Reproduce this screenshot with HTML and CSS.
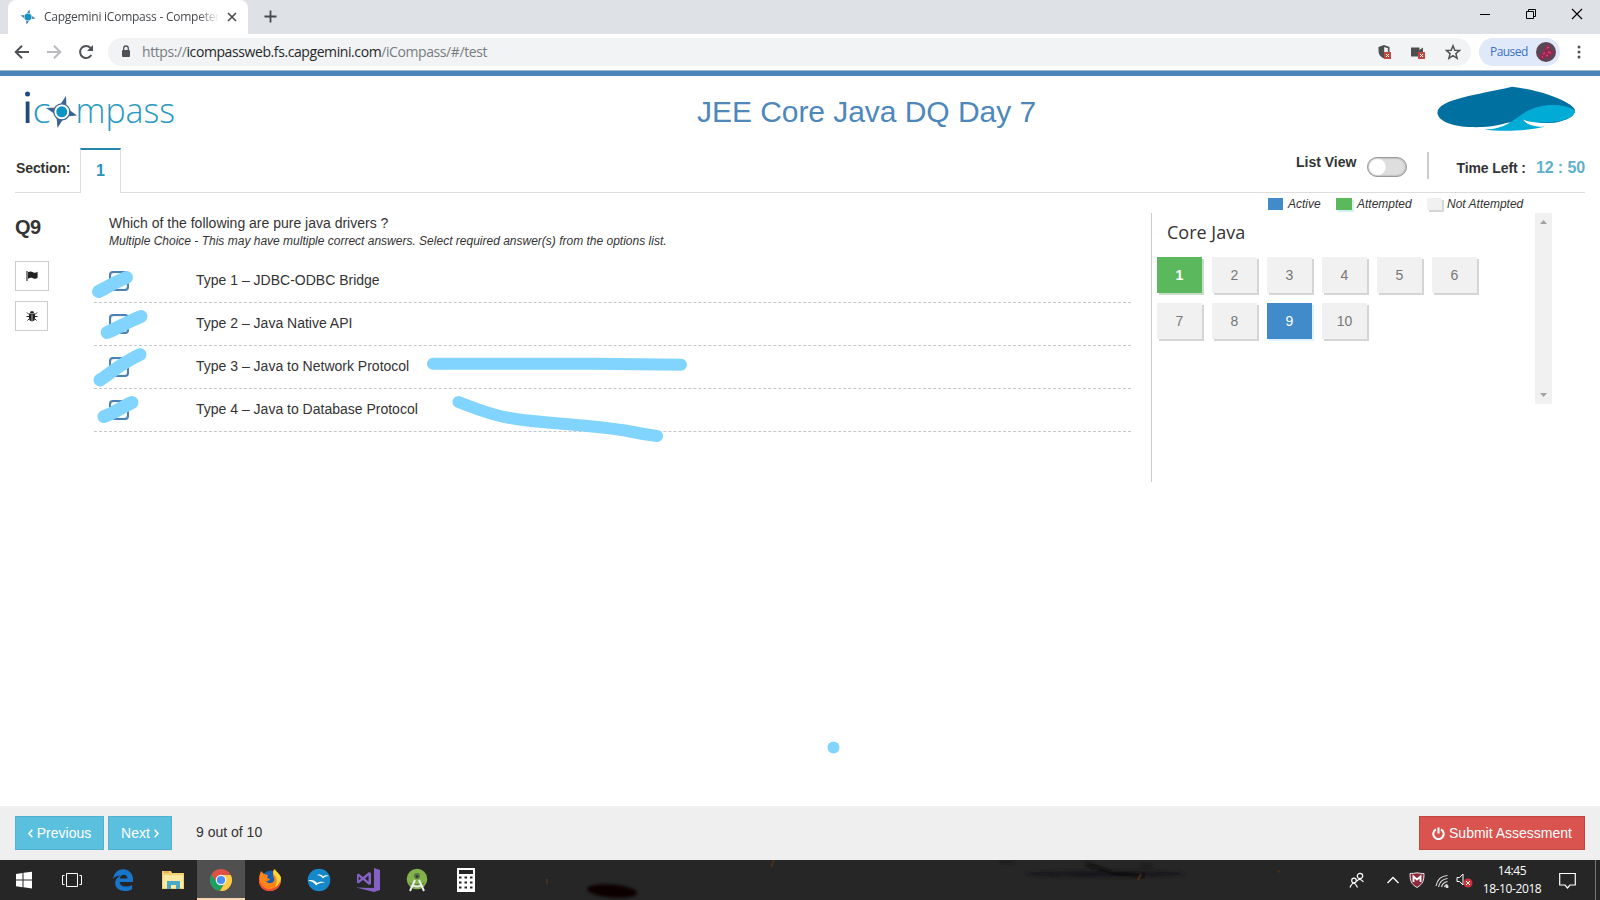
FILE: index.html
```html
<!DOCTYPE html>
<html lang="en">
<head>
<meta charset="utf-8">
<title>Capgemini iCompass - Competency</title>
<link rel="stylesheet" href="styles.css">
</head>
<body>
<div class="screen">
  <div class="tabstrip">
    <div class="tab">
      <svg class="favicon" width="16" height="16" viewBox="0 0 16 16"><path d="M9.500 .5L10 6 8 8 6 5.500zM6.500 15.500L6 10 8 8 10 10.500zM.5 6.500L6 6 8 8 5.500 10zM15.500 9.500L10 10 8 8 10.500 6z" fill="#3c6f9f"/><circle cx="8" cy="8" r="4.300" fill="#b9dbe9"/><circle cx="8" cy="8" r="3.300" fill="#1692c0"/></svg>
      <span class="tab-title">Capgemini iCompass - Competen</span>
      <svg class="tab-close" width="10" height="10" viewBox="0 0 10 10"><path d="M1 1l8 8M9 1l-8 8" stroke="#46494d" stroke-width="1.600"/></svg>
    </div>
    <svg class="new-tab" width="13" height="13" viewBox="0 0 13 13"><path d="M6.500 .5v12M.5 6.500h12" stroke="#46494d" stroke-width="1.800"/></svg>
    <div class="window-controls">
      <svg width="12" height="12" viewBox="0 0 12 12"><path d="M1 6.500h10" stroke="#000"/></svg>
      <svg width="12" height="12" viewBox="0 0 12 12"><path d="M1.500 3.500h7v7h-7zM3.500 3.500v-2h7v7h-2" fill="none" stroke="#000"/></svg>
      <svg width="12" height="12" viewBox="0 0 12 12"><path d="M1 1l10 10M11 1L1 11" stroke="#000" stroke-width="1.200"/></svg>
    </div>
  </div>
  <div class="toolbar">
    <div class="nav">
      <svg width="16" height="16" viewBox="0 0 16 16"><path d="M15 8H2M8 1.700L1.700 8 8 14.300" fill="none" stroke="#505356" stroke-width="2"/></svg>
      <svg width="16" height="16" viewBox="0 0 16 16"><path d="M1 8h13M8 1.700L14.300 8 8 14.300" fill="none" stroke="#b9bbbe" stroke-width="2"/></svg>
      <svg width="16" height="16" viewBox="0 0 16 16"><path d="M13.300 11A6 6 0 1 1 12.600 4" fill="none" stroke="#505356" stroke-width="2"/><path d="M15 1v6H9z" fill="#505356"/></svg>
    </div>
    <div class="omnibox">
      <svg class="lock" width="10" height="13" viewBox="0 0 10 13"><rect x="1" y="5" width="8" height="7" rx="1" fill="#505356"/><path d="M2.700 5.500V3.300a2.300 2.300 0 0 1 4.600 0v2.200" fill="none" stroke="#505356" stroke-width="1.300"/></svg>
      <span class="url">https://<b>icompassweb.fs.capgemini.com</b>/iCompass/#/test</span>
      <div class="omni-icons">
        <svg width="16" height="16" viewBox="0 0 16 16"><path d="M7 1l5.500 2v4c0 3.500-2 6-5.500 7.500C3.500 13 1.500 10.500 1.500 7V3z" fill="#4c4e50"/><path d="M7.200 3l3.700 1.200V8H7.200z" fill="#f6f7f8"/><path d="M7 8h7v7H7z" fill="#c5473e"/><path d="M9 10l3 3m0-3l-3 3" stroke="#fff"/></svg>
        <svg width="16" height="16" viewBox="0 0 16 16"><path d="M0 3.500h8.500v2.500L12 3.500V8H7v4.500H0z" fill="#4c4e50"/><path d="M7 8h7v7H7z" fill="#c5473e"/><path d="M9 10l3 3m0-3l-3 3" stroke="#fff"/></svg>
        <svg width="16" height="16" viewBox="0 0 16 16"><path d="M8 1.700l1.800 4.500 4.800.3-3.700 3.100 1.200 4.700L8 11.700l-4.100 2.600 1.200-4.700L1.400 6.500l4.800-.3z" fill="none" stroke="#505356" stroke-width="1.500"/></svg>
      </div>
    </div>
    <div class="profile"><span>Paused</span>
      <svg width="20" height="20" viewBox="0 0 20 20"><circle cx="10" cy="10" r="10" fill="#5c4554"/><path d="M3 13l5-3 0-3 4-4 3 3-3 2 5 1 1 3-4 1-1 4-3-2-5 3z" fill="#94264f"/><path d="M7 12l2-1m2-5l2-1m-1 5l3 1m-5 3l2-1m-6 2l1 0" stroke="#d54172" stroke-width="1.500"/></svg>
    </div>
    <svg class="menu" width="4" height="14" viewBox="0 0 4 14" fill="#505356"><circle cx="2" cy="2" r="1.500"/><circle cx="2" cy="7" r="1.500"/><circle cx="2" cy="12" r="1.500"/></svg>
  </div>
  <div class="page">
    <header class="header">
      <svg class="logo" width="156" height="46" viewBox="20 88 156 46">
        <circle cx="27.500" cy="94" r="2.500" fill="#1e4a80"/><path d="M25.700 101.500h3.800V123h-3.800z" fill="#1e4a80"/>
        <text x="32.500" y="122.500" textLength="18" lengthAdjust="spacingAndGlyphs" class="logo-text">c</text>
        <text x="75.500" y="122.500" textLength="99.500" lengthAdjust="spacingAndGlyphs" class="logo-text">mpass</text>
        <path d="M66 96l.5 12-4 2-4-3zM57.500 128l-1-11 4-3 4 3zM46 108l11-.5 3 4-3 4zM77 115.500l-11 1-3-4 3-5z" fill="#3d6394"/>
        <circle cx="61.800" cy="111.800" r="8" fill="#fff" stroke="#3d6394" stroke-width="1.200"/><circle cx="61.800" cy="111.800" r="5.500" fill="#0b94c4"/>
      </svg>
      <h1 class="title">JEE Core Java DQ Day 7</h1>
      <svg class="brand" width="140" height="46" viewBox="1436 86 140 46">
        <path d="M1437.500 113C1437 99 1480 94.500 1512 86.800C1547 91 1574 104 1574.800 110C1576 120 1551 125 1530 126C1520 123 1517 121 1505 123.500C1490 127.500 1480 127.300 1468 127C1452 126 1438 121 1437.500 113z" fill="#0070a1"/>
        <path d="M1574.700 110C1576 120 1556 122 1543 122.500C1534 123 1527 122 1523 119.500C1527 125 1537 127 1545 126.500C1532 130.500 1502 132 1484 129.500C1506 129 1513 120 1524 113C1540 103 1562 103 1574.700 110z" fill="#00acd6"/>
        <path d="M1523 119.500C1531 123 1548 123.500 1560 122.500L1545 126.500C1535 127 1527 125 1523 119.500zM1484 129.300C1495 128.800 1502 127 1508 122.500C1500 126.500 1490 127 1480 128z" fill="#fff"/>
      </svg>
    </header>
    <div class="section-row">
      <span class="section-label">Section:</span>
      <span class="section-tab">1</span>
      <span class="section-rest">
        <span class="list-view">List View</span><span class="toggle"></span><span class="rule"></span>
        <span class="time-label">Time Left :</span><span class="time">12 : 50</span>
      </span>
    </div>
    <main class="main">
      <aside class="question-tools">
        <h2>Q9</h2>
        <button class="tool flag"><svg width="12" height="12" viewBox="0 0 12 12"><path d="M1 1v10" stroke="#333" stroke-width="1.200"/><path d="M2 2.200C4 1 5.500 1.300 7 2.200s3 .7 4.600-.4v6C10 9 8.500 9 7 8.200S4 7.600 2 8.700z" fill="#222"/></svg></button>
        <button class="tool bug"><svg width="12" height="12" viewBox="0 0 12 12"><path d="M4 3a2 2 0 0 1 4 0zM3 3.500h6v4.500q0 3-3 3.500-3-.5-3-3.500z" fill="#222"/><path d="M1 2.500l2 2M11 2.500l-2 2M.5 6.500H3m6 0h2.500M1.500 10.500l2-2m7 2l-2-2" stroke="#222"/><path d="M6 4.500v7" stroke="#eee" stroke-width=".7"/></svg></button>
      </aside>
      <section class="question">
        <p class="prompt">Which of the following are pure java drivers ?</p>
        <p class="hint">Multiple Choice - This may have multiple correct answers. Select required answer(s) from the options list.</p>
        <div class="options">
          <div class="option"><i class="check"></i><span>Type 1 – JDBC-ODBC Bridge</span></div>
          <div class="option"><i class="check"></i><span>Type 2 – Java Native API</span></div>
          <div class="option"><i class="check"></i><span>Type 3 – Java to Network Protocol</span></div>
          <div class="option"><i class="check"></i><span>Type 4 – Java to Database Protocol</span></div>
        </div>
      </section>
      <aside class="palette">
        <div class="legend">
          <span class="swatch active"></span><em class="l-active">Active</em>
          <span class="swatch done"></span><em class="l-done">Attempted</em>
          <span class="swatch"></span><em>Not Attempted</em>
        </div>
        <div class="palette-body">
          <div class="palette-main">
            <h3>Core Java</h3>
            <div class="grid">
              <span class="cell done">1</span><span class="cell">2</span><span class="cell">3</span><span class="cell">4</span><span class="cell">5</span><span class="cell">6</span>
              <span class="cell">7</span><span class="cell">8</span><span class="cell active">9</span><span class="cell">10</span>
            </div>
          </div>
          <div class="scrollbar">
            <svg width="7" height="4" viewBox="0 0 7 4"><path d="M0 4L3.500 0 7 4z" fill="#a3a3a3"/></svg>
            <svg width="7" height="4" viewBox="0 0 7 4"><path d="M0 0L3.500 4 7 0z" fill="#a3a3a3"/></svg>
          </div>
        </div>
      </aside>
    </main>
    <footer class="footer">
      <button class="btn prev"><svg width="5" height="9" viewBox="0 0 5 9"><path d="M4.300 .7L1 4.500l3.300 3.800" fill="none" stroke="#fff" stroke-width="1.500"/></svg><span>Previous</span></button>
      <button class="btn next"><span>Next</span><svg width="5" height="9" viewBox="0 0 5 9"><path d="M.7 .7L4 4.500.7 8.300" fill="none" stroke="#fff" stroke-width="1.500"/></svg></button>
      <span class="count">9 out of 10</span>
      <button class="btn submit"><svg width="13" height="13" viewBox="0 0 13 13"><path d="M4 2.300a5.200 5.200 0 1 0 5 0M6.500 .5v6" fill="none" stroke="#fff" stroke-width="2.100"/></svg><span>Submit Assessment</span></button>
    </footer>
  </div>
  <div class="taskbar">
    <svg class="wallpaper" width="780" height="40" viewBox="520 860 780 40">
      <defs><filter id="soft"><feGaussianBlur stdDeviation="1.600"/></filter></defs>
      <g filter="url(#soft)"><ellipse cx="612" cy="891" rx="25" ry="6.500" transform="rotate(5 612 891)" fill="#0c0000"/><ellipse cx="1105" cy="874" rx="80" ry="3" fill="#19181a"/><path d="M1086 864l26 9 33 3" fill="none" stroke="#110908" stroke-width="3"/><path d="M1000 862h14M1140 866h12" stroke="#151515" stroke-width="2"/></g>
      <path d="M774 860l-3 7M1141 874l-3 6M547 879v5M1278 871l2 1" stroke="#5a3510" stroke-width="2" opacity=".7"/>
    </svg>
    <div class="apps">
      <span class="app"><svg width="24" height="24" viewBox="0 0 24 24" fill="#fff"><path d="M4 6l6.500-1v6.500H4zM11.500 4.800L20 3.800v7.700h-8.500zM4 12.500h6.500v6.700L4 18.200zM11.500 12.500H20v8l-8.500-1.200z"/></svg></span>
      <span class="app"><svg width="24" height="24" viewBox="0 0 24 24" fill="none" stroke="#fff"><path d="M6.500 5.500h11v13h-11zM4.500 7.500h-2v9h2M19.500 7.500h2v9h-2"/></svg></span>
      <span class="app"><svg width="24" height="24" viewBox="0 0 24 24"><path d="M2 11C3 4 8 1 12.500 1.200 18.500 1.500 22 6 22 11v3H8.700c.2 3 2.800 4.600 6 4.600 2.500 0 4.500-.6 6.300-1.700v4.300c-2 1.300-4.500 1.800-7.300 1.800C7.500 23 4.200 19 4.200 15.500c0-4 2.500-6.500 5.300-7.700C6.500 7.500 4 8.700 2 11zM8.800 10.500h7.500c0-2.500-1.300-3.700-3.400-3.700-2 0-3.700 1.300-4.100 3.700z" fill="#1776c9" fill-rule="evenodd"/></svg></span>
      <span class="app"><svg width="24" height="24" viewBox="0 0 24 24"><path d="M1 3h9l1 2h12v16H1z" fill="#f4cf73"/><path d="M2 7h20v13H2z" fill="#fde9a2"/><path d="M3 4h5" stroke="#e8a545" stroke-width="1.500"/><path d="M6 21v-8h13v8h-4v-4h-5v4z" fill="#4aa9c6"/></svg></span>
      <span class="app current"><svg width="24" height="24" viewBox="0 0 24 24"><circle cx="12" cy="12" r="11" fill="#de5145"/><path d="M2.500 6.500A11 11 0 0 0 11 23l5-9H7.500z" fill="#1aa15f"/><path d="M21.700 7H12l4.800 6L11 23A11 11 0 0 0 21.700 7z" fill="#ffcd46"/><circle cx="12" cy="12" r="5.300" fill="#f4f4f4"/><circle cx="12" cy="12" r="4.100" fill="#4b8bf4"/></svg></span>
      <span class="app"><svg width="24" height="24" viewBox="0 0 24 24"><circle cx="12.500" cy="11.500" r="9" fill="#195fb0"/><path d="M2 6l1-3 3 3 4 1-1 3 3 1c-1 2-3 2-4 2 2 3 6 3 8 0 1-3-1-4-1-7 0-2 1-4 2-5 1 3 5 4 6 9 1 7-4 13-11 13C5 23 1 18 1 13c0-3 0-5 1-7z" fill="#ff8418"/><path d="M16 1c2 3 6 5 7 9-1 3-2 7-6 9 3-5 2-10-1-12-1-2-1-4 0-6z" fill="#ffd739"/><path d="M1.500 8c0 5 1 11 8 13 6 1 10-2 13-7-1 6-6 9-11 9C4 23-.5 16 1.500 8z" fill="#f3443c"/></svg></span>
      <span class="app"><svg width="24" height="24" viewBox="0 0 24 24"><circle cx="12" cy="12" r="11.300" fill="#1687c9"/><path d="M1 12.500c4-1 7 0 9 2.500 3-2 6-1.500 8-.5-4 0-7 1-9 3-2-3-4-4-8-5zM10 7c3-1 5 0 6 1.500 2-1.500 4-1.500 6-.5-3 0-5 1-6 2.500C15 8.500 13 7.500 10 7z" fill="#fff"/></svg></span>
      <span class="app"><svg width="24" height="24" viewBox="0 0 24 24"><path d="M18 0l6 2v20l-6 2L0 19.500l18 .5zM1 6.500l1.500-1 4.500 3.500 6-5 2 1v11l-2 1-6-5-4.500 3.500-1.500-1zM2.700 8.500v4l2.300-2zM12.500 7.500l-3.500 3 3.500 3z" fill="#8661c5" fill-rule="evenodd"/></svg></span>
      <span class="app"><svg width="24" height="24" viewBox="0 0 24 24"><circle cx="12" cy="11" r="10.300" fill="#83b14a"/><path d="M4 14q8 4 16 0l-3 4H7z" fill="#5d8a39"/><path d="M10 12L5 23M14 12l5 11M7.500 17q4.500 3 9 0" fill="none" stroke="#eee" stroke-width="2"/><circle cx="12" cy="8" r="3" fill="#56734b"/><circle cx="12" cy="8.500" r="1.200" fill="#303c2c"/></svg></span>
      <span class="app"><svg width="24" height="24" viewBox="0 0 24 24"><path d="M3 0h18v24H3z" fill="#fff"/><path d="M5 2h14v4H5z" fill="#262626"/><path d="M5 9.500h14M5 14.500h14M5 19.500h14" stroke="#262626" stroke-width="2" stroke-dasharray="2.500 3"/></svg></span>
    </div>
    <div class="tray">
      <svg class="people" width="16" height="16" viewBox="0 0 16 16" fill="none" stroke="#fff" stroke-width="1.200"><circle cx="11" cy="4" r="2.700"/><circle cx="5" cy="8.500" r="2.300"/><path d="M8 9q3-3.500 6.500 1M1 15.500q3.500-8.500 7.500 0"/></svg>
      <svg class="chev" width="14" height="8" viewBox="0 0 14 8"><path d="M1.500 7L7 1.500 12.500 7" fill="none" stroke="#fff" stroke-width="1.300"/></svg>
      <svg class="shield" width="16" height="16" viewBox="0 0 16 16"><path d="M1 1.500q4 0 7-.7 3 .7 7 .7c0 7-1 10.500-7 14C2 12 1 8.500 1 1.500z" fill="#8e2a3c" stroke="#e4e4e4"/><path d="M4.500 10V4.500L8 7.500l3.500-3V10" fill="none" stroke="#fff" stroke-width="1.900"/></svg>
      <svg class="wifi" width="14" height="14" viewBox="0 0 14 14" fill="none" stroke="#ddd" stroke-width="1.200"><path d="M1 12Q3 2 12.500 1.500M3.500 13Q5 5.500 12.500 4.500M6.500 13Q7.500 8.500 12.500 7.500M9.500 13q.5-2.500 3-2.500"/><circle cx="12" cy="12.500" r="1" fill="#fff"/></svg>
      <svg class="sound" width="17" height="16" viewBox="0 0 17 16"><path d="M1 5.500h2.500L7 2v11L3.500 9.500H1z" fill="none" stroke="#fff"/><circle cx="12" cy="11" r="4.500" fill="#d13239"/><path d="M10 9l4 4m0-4l-4 4" stroke="#fff"/></svg>
      <div class="clock"><span>14:45</span><span class="date">18-10-2018</span></div>
      <svg class="notice" width="17" height="17" viewBox="0 0 17 17"><path d="M.7 1.500h15.600v11.500H11l-2.500 3-2.500-3H.7z" fill="none" stroke="#fff" stroke-width="1.200"/></svg>
    </div>
  </div>
  <svg class="ink" width="1600" height="900" viewBox="0 0 1600 900" fill="none" stroke="#81d4fd" stroke-linecap="round" stroke-width="13">
    <path d="M98.500 291.500C104 289 114 282.500 126.500 277.500"/><path d="M107 332.500C116 329 127 322 141 316.500"/><path d="M100 380C111 373 120 364 140 354.500"/><path d="M104 416.500C113 414 120 408 132 402.500"/>
    <path d="M433 363.700H595L681 364.700" stroke-width="12"/><path d="M458.500 402C485 412.500 502 418 527 420.500C570 425 590 425 625 430.500Q642 434 657 436" stroke-width="12"/><circle cx="833.500" cy="747.500" r="6" fill="#81d4fd" stroke="none"/>
  </svg>
</div>
</body>
</html>
```
FILE: styles.css
```css
* { box-sizing: border-box; }
body { margin: 0; background: #fff; color: #333; font-family: "Liberation Sans", Arial, sans-serif; font-size: 14px; }
h1, h2, h3, p { margin: 0; }
svg { display: block; flex: none; }
button { font-family: inherit; }
.screen { width: 1600px; height: 900px; display: flex; flex-direction: column; position: relative; overflow: hidden; }

.tabstrip { height: 34px; background: #dee1e6; display: flex; padding-left: 8px; flex: none; }
.tab { width: 240px; height: 34px; background: #fff; border-radius: 8px 8px 0 0; display: flex; align-items: center; padding-left: 12px; }
.tab-title { width: 175px; margin-left: 8px; white-space: nowrap; font: 12px/20px "Open Sans", "Noto Sans", sans-serif; letter-spacing: -.24px; color: #45484c; mask-image: linear-gradient(90deg, #000 88%, transparent 100%); }
.tab-close { margin-left: 8px; }
.new-tab { margin: 10px 0 0 16px; }
.window-controls { margin-left: auto; display: flex; gap: 34px; padding: 8px 17px 0 0; }

.toolbar { height: 36px; background: #fff; display: flex; align-items: center; flex: none; }
.nav { display: flex; gap: 16px; padding-left: 14px; width: 108px; }
.omnibox { width: 1363px; height: 28px; border-radius: 14px; background: #f1f3f4; display: flex; align-items: center; padding: 0 10px 0 13px; }
.lock { margin-top: -1px; }
.url { margin-left: 11px; font: 14px/20px "Open Sans", "Noto Sans", sans-serif; letter-spacing: -.41px; color: #797c80; white-space: nowrap; }
.url b { font-weight: 400; color: #26282b; }
.omni-icons { margin-left: auto; display: flex; gap: 18px; }
.profile { margin-left: 8px; width: 81px; height: 28px; border-radius: 14px; background: #dfe9f9; display: flex; align-items: center; justify-content: space-between; padding: 0 4px 0 11px; font: 12px/20px "Open Sans", sans-serif; letter-spacing: -.55px; color: #3c70c0; }
.menu { margin-left: 17px; }

.page { height: 790px; flex: none; display: flex; flex-direction: column; border-top: 1px solid #a3b9c9; }
.header { border-top: 5px solid #4984ba; height: 77px; flex: none; display: grid; grid-template-columns: 677px 1fr 164px; }
.logo { margin: 12px 0 0 20px; }
.logo-text { font: 300 35px "Open Sans", Lato, sans-serif; fill: #2798c1; }
.title { margin-top: 19px; padding-left: 20px; font-size: 30px; font-weight: 400; line-height: 34px; letter-spacing: -.05px; color: #4e88ba; white-space: nowrap; }
.brand { margin-top: 10px; }

.section-row { margin: 0 15px; height: 45px; display: flex; font-weight: bold; flex: none; }
.section-label { width: 65px; padding: 12px 0 0 1px; line-height: 16px; letter-spacing: -.1px; border-bottom: 1px solid #ddd; }
.section-tab { width: 41px; border: solid #ddd; border-width: 0 1px; border-top: 2px solid #2587ae; text-align: center; color: #2a93bd; font-size: 16px; line-height: 42px; }
.section-rest { flex: 1; display: flex; justify-content: flex-end; border-bottom: 1px solid #ddd; white-space: nowrap; }
.list-view { margin-top: 6px; line-height: 16px; }
.toggle { width: 40px; height: 20px; margin: 9px 0 0 11px; border: 1px solid #999; border-radius: 10px; background: radial-gradient(circle at 9px 9px, #fff 8px, #dedede 9px); box-shadow: inset 0 0 2px #888; }
.rule { width: 2px; height: 27px; margin: 4px 0 0 20px; background: #ccc; }
.time-label { margin: 12px 0 0 27px; line-height: 16px; letter-spacing: -.1px; }
.time { margin: 10px 0 0 10px; font-size: 16px; line-height: 20px; letter-spacing: -.1px; color: #5fb0cb; }

.main { flex: 1; display: grid; grid-template-columns: 94px 1037px 469px; min-height: 0; }
.question-tools { padding: 23px 0 0 15px; }
.question-tools h2 { font-size: 20px; line-height: 23px; letter-spacing: -.5px; }
.tool { display: flex; align-items: center; justify-content: center; height: 30px; background: #fff; border: 1px solid #ccc; padding: 0; }
.flag { width: 34px; margin-top: 22px; }
.bug { width: 33px; margin-top: 10px; }
.prompt { padding: 22px 0 0 15px; line-height: 16px; }
.hint { padding: 3px 0 0 15px; font-size: 12px; line-height: 14px; font-style: italic; }
.options { padding-top: 12px; }
.option { height: 43px; display: flex; border-bottom: 1px dashed #c6c6c6; }
.check { width: 20px; height: 20px; margin: 11px 0 0 15px; border: 2px solid #4b81b3; border-radius: 4px; box-shadow: inset 0 0 1px #4b81b3; }
.option span { margin: 12px 0 0 67px; line-height: 16px; }

.palette { padding-left: 20px; }
.legend { height: 20px; display: flex; align-items: flex-start; padding: 5px 0 0 117px; font-size: 12px; line-height: 13px; white-space: nowrap; }
.swatch { width: 15px; height: 12px; background: #f1f1f1; box-shadow: 2px 2px #d6d6d6; margin-right: 5px; }
.swatch.active { background: #428bca; box-shadow: none; }
.swatch.done { background: #5cb85c; box-shadow: 2px 2px #d4f0ef; width: 16px; }
.l-active { width: 48px; }
.l-done { width: 70px; }
.palette-body { display: flex; height: 269px; border-left: 1px solid #ccc; }
.palette-main { width: 383px; padding-left: 5px; }
.palette-main h3 { padding: 7px 0 0 10px; font: 400 18px/25px "Open Sans", sans-serif; }
.grid { padding-top: 12px; display: grid; grid-template-columns: repeat(6, 45px); gap: 10px; }
.cell { height: 36px; line-height: 37px; text-align: center; background: #f1f1f1; box-shadow: 2px 2px #d5d5d5; color: #777; }
.cell.done { background: #5cb85c; box-shadow: 2px 2px #c8dcc8; color: #fff; font-weight: bold; }
.cell.active { background: #428bca; box-shadow: 2px 2px #e0f2fb; color: #fff; }
.scrollbar { width: 17px; height: 191px; background: #f1f1f1; display: flex; flex-direction: column; justify-content: space-between; align-items: center; padding: 7px 0; }

.footer { height: 54px; flex: none; background: #efefef; display: flex; padding: 10px 15px 0; }
.btn { height: 34px; border: 1px solid #52b1cf; background: #5bc0de; color: #fff; font-size: 14px; display: flex; align-items: center; justify-content: center; gap: 4px; padding: 0; white-space: nowrap; }
.prev { width: 89px; }
.next { width: 64px; margin-left: 4px; }
.count { margin: 8px 0 0 24px; line-height: 16px; }
.submit { width: 166px; margin-left: auto; background: #d9534f; border-color: #c14541; }

.taskbar { height: 40px; background: #262626; display: flex; position: relative; }
.wallpaper { position: absolute; left: 520px; top: 0; }
.apps { display: flex; }
.app { width: 49px; height: 40px; display: flex; align-items: center; justify-content: center; }
.app:first-child { width: 48px; }
.app:nth-child(2) { width: 48px; }
.app:nth-child(3) { width: 53px; }
.app:nth-child(4) { width: 48px; }
.app.current { width: 48px; background: #505050; border-bottom: 2px solid #f7d5ae; padding-top: 2px; }
.tray { margin-left: auto; display: flex; align-items: center; color: #fff; border-right: 1px solid #777; margin-right: 4px; padding-right: 19px; }
.chev { margin-left: 21px; }
.shield { margin-left: 9px; }
.wifi { margin: 2px 0 0 10px; }
.sound { margin-left: 7px; }
.clock { width: 78px; display: flex; flex-direction: column; align-items: center; font: 12px/18px "Open Sans", sans-serif; letter-spacing: -.4px; }
.notice { margin-left: 8px; }
.ink { position: absolute; left: 0; top: 0; pointer-events: none; }
```
